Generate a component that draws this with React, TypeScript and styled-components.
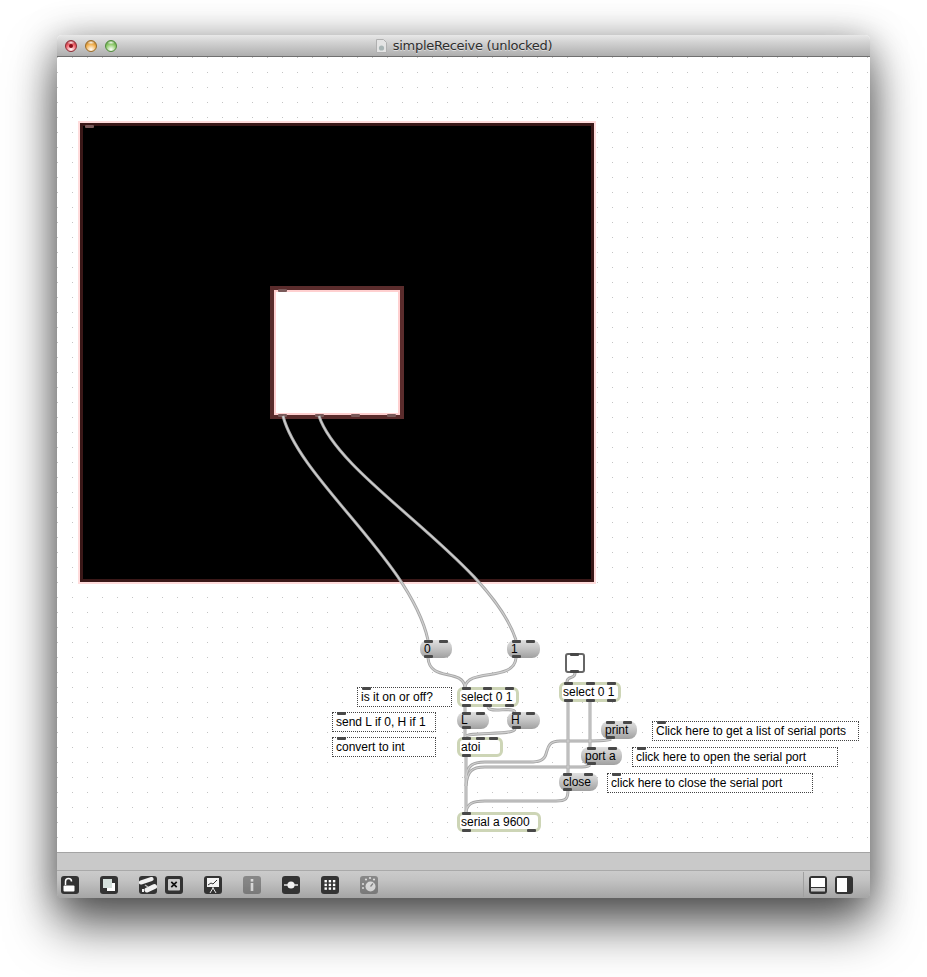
import React from 'react'
import styled, { createGlobalStyle } from 'styled-components'

const GlobalStyle = createGlobalStyle`
  html, body {
    margin: 0;
    padding: 0;
    background: #fff;
  }
  body {
    width: 927px;
    height: 977px;
    overflow: hidden;
  }
`

const Page = styled.div`
  width: 927px;
  height: 977px;
  padding: 35px 57px 0;
  box-sizing: border-box;
`

const Window = styled.div`
  width: 813px;
  height: 863px;
  display: flex;
  flex-direction: column;
  border-radius: 5px 5px 4px 4px;
  overflow: hidden;
`

const WindowShadow = styled.div`
  width: 813px;
  height: 863px;
  border-radius: 5px;
  box-shadow: 0 28px 50px rgba(0, 0, 0, 0.6), 0 4px 36px rgba(0, 0, 0, 0.35);
`

const TitleBar = styled.div`
  height: 21px;
  flex: none;
  position: relative;
  display: flex;
  align-items: center;
  justify-content: center;
  gap: 6px;
  padding-left: 1px;
  background: linear-gradient(#e8e8e8, #d2d2d2 35%, #aeaeae);
  border-bottom: 1px solid #6f6f6f;
`

const Lights = styled.div`
  position: absolute;
  left: 8px;
  top: 5px;
  display: flex;
  gap: 8px;
`

const Light = styled.span<{ $color: string; $dark: string }>`
  width: 12px;
  height: 12px;
  border-radius: 50%;
  box-sizing: border-box;
  border: 1px solid ${p => p.$dark};
  background: radial-gradient(ellipse 4px 2px at 50% 15%, rgba(255, 255, 255, 0.85), transparent),
    radial-gradient(circle at 50% 85%, #fff 0, ${p => p.$color} 55%, ${p => p.$dark} 100%);
  display: flex;
  align-items: center;
  justify-content: center;
`

const CloseDot = styled.i`
  width: 4px;
  height: 4px;
  border-radius: 50%;
  background: #8a0d18;
`

const Title = styled.span`
  font: 13px/16px 'DejaVu Sans', sans-serif;
  letter-spacing: -0.3px;
  color: #2e2e2e;
  text-shadow: 0 1px 0 rgba(255, 255, 255, 0.5);
`

const Canvas = styled.div`
  position: relative;
  flex: 1;
  background-color: #fff;
  background-image: radial-gradient(circle at 0.5px 0.5px, #c4c4c4 0.6px, transparent 0.8px);
  background-size: 15px 15px;
  background-position: 0 0;
`

const Wires = styled.svg`
  position: absolute;
  left: 0;
  top: 0;
  z-index: 3;
  pointer-events: none;
`

const Panel = styled.div<{ $x: number; $y: number; $w: number; $h: number; $fill: string }>`
  position: absolute;
  left: ${p => p.$x}px;
  top: ${p => p.$y}px;
  width: ${p => p.$w}px;
  height: ${p => p.$h}px;
  box-sizing: border-box;
  background: ${p => p.$fill};
  border: 3px solid #3a1818;
  outline: 2px solid #ffdcdc;
  z-index: 1;
`

const InnerPanel = styled(Panel)`
  border-width: 4px;
  border-color: #5a2c2c;
  outline: none;
  z-index: 2;
  box-shadow: inset 0 0 0 2px #ffd0d0;
`

const PanelPort = styled.i<{ $x: number; $y: number }>`
  position: absolute;
  left: ${p => p.$x}px;
  top: ${p => p.$y}px;
  width: 9px;
  height: 3px;
  border-radius: 1px;
  background: #7a5a5a;
`

const Node = styled.div<{ $x: number; $y: number; $w: number; $h: number }>`
  position: absolute;
  left: ${p => p.$x}px;
  top: ${p => p.$y}px;
  width: ${p => p.$w}px;
  height: ${p => p.$h}px;
  box-sizing: border-box;
  font: 12px/${p => p.$h}px 'Liberation Sans', Arial, sans-serif;
  color: #000;
  white-space: nowrap;
  z-index: 4;
`

const ObjectBox = styled(Node)`
  background: #fff;
  border: 3px solid #cdd5b6;
  border-radius: 6px;
  padding-left: 1px;
  line-height: 14px;
`

const MessageBox = styled(Node)`
  background: linear-gradient(#e0e0e0, #c6c6c6 45%, #a0a0a0);
  border-radius: 8px;
  padding-left: 4px;
`

const CommentBox = styled(Node)`
  background: #fff;
  border: 1px dotted #444;
  padding-left: 3px;
  line-height: 19px;
`

const ToggleBox = styled(Node)`
  background: #fff;
  border: 2px solid #666;
  border-radius: 3px;
`

const Port = styled.i<{ $x: number; $side: 'top' | 'bottom'; $inset: number }>`
  position: absolute;
  left: ${p => p.$x}px;
  ${p => p.$side}: ${p => -p.$inset}px;
  width: 9px;
  height: 3px;
  border-radius: 1px;
  background: #484848;
`

const StatusStrip = styled.div`
  height: 19px;
  flex: none;
  box-sizing: border-box;
  background: #c9c9c9;
  border-top: 1px solid #a4a4a4;
  border-bottom: 1px solid #a9a9a9;
`

const Toolbar = styled.div`
  height: 27px;
  flex: none;
  box-sizing: border-box;
  display: flex;
  align-items: center;
  padding: 0 17px 0 4px;
  gap: 21px;
  background: linear-gradient(#cbcbcb, #c2c2c2 35%, #a5a5a5);
`

const ToolGroup = styled.div`
  display: flex;
  gap: 8px;
`

const ToolButton = styled.svg<{ $dim?: boolean }>`
  width: 18px;
  height: 18px;
  display: block;
  opacity: ${p => (p.$dim ? 0.42 : 1)};
`

const RightTools = styled.div`
  margin-left: auto;
  display: flex;
  gap: 8px;
  align-items: center;
  height: 25px;
  padding-left: 5px;
  border-left: 1px solid #a0a0a0;
`

type Shape = {
  kind: 'object' | 'message' | 'comment' | 'toggle'
  label?: string
  x: number
  y: number
  w: number
  h: number
  top: number[]
  bottom: number[]
}

// page coordinates, the canvas starts at 57,57
const shapes: Shape[] = [
  { kind: 'message', label: '0', x: 420, y: 640, w: 32, h: 18, top: [4, 19], bottom: [4] },
  { kind: 'message', label: '1', x: 507, y: 640, w: 33, h: 18, top: [5, 19], bottom: [5] },
  { kind: 'comment', label: 'is it on or off?', x: 357, y: 687, w: 95, h: 20, top: [5], bottom: [] },
  { kind: 'object', label: 'select 0 1', x: 457, y: 687, w: 62, h: 20, top: [5, 26, 48], bottom: [5, 26, 48] },
  { kind: 'comment', label: 'send L if 0, H if 1', x: 332, y: 712, w: 104, h: 20, top: [5], bottom: [] },
  { kind: 'message', label: 'L', x: 457, y: 712, w: 32, h: 17, top: [5, 19], bottom: [5] },
  { kind: 'message', label: 'H', x: 507, y: 712, w: 33, h: 17, top: [5, 19], bottom: [5] },
  { kind: 'comment', label: 'convert to int', x: 332, y: 737, w: 104, h: 20, top: [5], bottom: [] },
  { kind: 'object', label: 'atoi', x: 457, y: 737, w: 46, h: 20, top: [5, 19, 32], bottom: [5] },
  { kind: 'object', label: 'serial a 9600', x: 457, y: 812, w: 84, h: 20, top: [5], bottom: [5, 70] },
  { kind: 'toggle', x: 565, y: 653, w: 20, h: 20, top: [5], bottom: [5] },
  { kind: 'object', label: 'select 0 1', x: 559, y: 682, w: 62, h: 20, top: [5, 27, 48], bottom: [5, 27, 48] },
  { kind: 'message', label: 'print', x: 601, y: 721, w: 36, h: 18, top: [5, 22], bottom: [5] },
  { kind: 'comment', label: 'Click here to get a list of serial ports', x: 652, y: 721, w: 207, h: 20, top: [5], bottom: [] },
  { kind: 'message', label: 'port a', x: 581, y: 747, w: 41, h: 18, top: [6, 27], bottom: [6] },
  { kind: 'comment', label: 'click here to open the serial port', x: 632, y: 747, w: 206, h: 20, top: [5], bottom: [] },
  { kind: 'message', label: 'close', x: 559, y: 773, w: 39, h: 18, top: [4, 25], bottom: [4] },
  { kind: 'comment', label: 'click here to close the serial port', x: 607, y: 773, w: 206, h: 20, top: [5], bottom: [] },
]

const boxes = { object: ObjectBox, message: MessageBox, comment: CommentBox, toggle: ToggleBox }
const insets = { object: 3, message: 0, comment: 1, toggle: 2 }

const cords = [
  'M283 416C300 480 410 560 428 640',
  'M319 416C340 480 490 560 516 640',
  'M428 658C430 682 462 668 465 687',
  'M516 658C514 682 468 668 465 687',
  'M465 707V712',
  'M488 707C490 714 513 706 515 712',
  'M465 729V737',
  'M515 729C514 736 467 731 465 737',
  'M466 757V812',
  'M611 739C608 741 600 741 560 741C548 741 548 748 546 754C544 761 538 762 530 762H485C472 762 467 766 466 778',
  'M590 765C588 767 585 767 575 767H485C472 767 467 771 466 786',
  'M568 790C568 799 566 801 556 801H485C472 801 467 804 466 812',
  'M568 702V773',
  'M590 702V747',
  'M575 673C575 680 567 675 567 682',
]

function Cords() {
  return (
    <Wires width={813} height={795} viewBox="57 57 813 795" fill="none">
      {cords.map(d => (
        <path key={d} d={d} stroke="#a6a6a6" strokeWidth={3} />
      ))}
      {cords.map(d => (
        <path key={`${d}-in`} d={d} stroke="#d0d0d0" strokeWidth={1.2} />
      ))}
    </Wires>
  )
}

function Tools() {
  return (
    <>
      <ToolButton viewBox="0 0 18 18">
        <rect width="18" height="18" rx="3" fill="#333" />
        <rect x="2.5" y="9.5" width="11" height="6" rx="1" fill="#fff" />
        <path d="M4.5 9V5.5a3 3 0 0 1 6 0" fill="none" stroke="#fff" strokeWidth="1.5" />
      </ToolButton>
      <ToolButton viewBox="0 0 18 18">
        <rect width="18" height="18" rx="3" fill="#333" />
        <rect x="7" y="7" width="8" height="8" fill="#fff" />
        <rect x="3" y="3" width="9" height="9" fill="#d5e0dc" />
      </ToolButton>
      <ToolGroup>
        <ToolButton viewBox="0 0 18 18">
          <rect width="18" height="18" rx="3" fill="#333" />
          <path d="M2 6.5 12.5 3" stroke="#f2f2f2" strokeWidth="4" strokeLinecap="round" />
          <path d="M8 14l7.5-3.5" stroke="#f2f2f2" strokeWidth="5" strokeLinecap="round" />
          <path d="M3 14.5h2" stroke="#f2f2f2" strokeWidth="3" />
          <path d="M6 9l3 2" stroke="#bbb" strokeWidth="1.5" />
        </ToolButton>
        <ToolButton viewBox="0 0 18 18">
          <rect width="18" height="18" rx="3" fill="#333" />
          <rect x="3" y="3" width="12" height="11.5" rx="1" fill="#c9c9c9" />
          <path d="M6.3 5.8l5.4 5.4M11.7 5.8l-5.4 5.4" stroke="#111" strokeWidth="1.7" />
        </ToolButton>
      </ToolGroup>
      <ToolButton viewBox="0 0 18 18">
        <rect width="18" height="18" rx="3" fill="#333" />
        <rect x="3" y="2" width="12" height="9" fill="#f4f4f4" />
        <path d="M4 9l3-2 2 1 4-4" fill="none" stroke="#333" strokeWidth="1" />
        <path d="M9 11v2M9 12l-3 5M9 12l3 5" stroke="#e8e8e8" strokeWidth="1" />
      </ToolButton>
      <ToolButton $dim viewBox="0 0 18 18">
        <rect width="18" height="18" rx="3" fill="#333" />
        <rect x="7.7" y="3" width="2.6" height="2.6" fill="#fff" />
        <rect x="7.7" y="7" width="2.6" height="8" fill="#fff" />
      </ToolButton>
      <ToolButton viewBox="0 0 18 18">
        <rect width="18" height="18" rx="3" fill="#333" />
        <path d="M2 9h14" stroke="#f2f2f2" strokeWidth="1.4" />
        <circle cx="9" cy="9" r="3.6" fill="#f2f2f2" />
      </ToolButton>
      <ToolButton viewBox="0 0 18 18">
        <rect width="18" height="18" rx="3" fill="#333" />
        {[4, 7.7, 11.4].map(y =>
          [3.5, 7.7, 11.9].map(x => <rect key={`${x}-${y}`} x={x} y={y} width="2.4" height="2.4" fill="#fff" />),
        )}
      </ToolButton>
      <ToolButton $dim viewBox="0 0 18 18">
        <rect width="18" height="18" rx="3" fill="#333" />
        <circle cx="10.5" cy="10.5" r="5" fill="#fff" />
        <path d="M10.5 10.5l2.5-3" stroke="#333" strokeWidth="1.2" />
        {[[3, 8], [3, 12], [6, 3.5], [10, 2], [14, 3.5]].map(([x, y]) => (
          <circle key={`${x}-${y}`} cx={x} cy={y} r="1.1" fill="#fff" />
        ))}
      </ToolButton>
      <RightTools>
        <ToolButton viewBox="0 0 18 18">
          <rect width="18" height="18" rx="3" fill="#333" />
          <rect x="2" y="2" width="14" height="9" fill="#fff" />
          <rect x="2" y="12" width="14" height="3.5" fill="#c8c8c8" />
        </ToolButton>
        <ToolButton viewBox="0 0 18 18">
          <rect width="18" height="18" rx="3" fill="#333" />
          <rect x="2" y="2" width="10" height="14" fill="#fff" />
        </ToolButton>
      </RightTools>
    </>
  )
}

export default function App() {
  return (
    <Page>
      <GlobalStyle />
      <WindowShadow>
        <Window>
          <TitleBar>
            <Lights>
              <Light $color="#f0616a" $dark="#8e2a33">
                <CloseDot />
              </Light>
              <Light $color="#f2b04f" $dark="#9b6a25" />
              <Light $color="#8fcb6c" $dark="#4f8a3a" />
            </Lights>
            <svg width="11" height="14" viewBox="0 0 11 14">
              <path d="M.5.5h7l3 3v10H.5z" fill="#e4e4e4" stroke="#b0b0b0" />
              <circle cx="5.5" cy="9" r="2.6" fill="#a9b5b5" />
            </svg>
            <Title>simpleReceive (unlocked)</Title>
          </TitleBar>
          <Canvas>
            <Panel $x={23} $y={66} $w={514} $h={459} $fill="#000">
              <PanelPort $x={2} $y={-1} />
            </Panel>
            <InnerPanel $x={213} $y={229} $w={134} $h={133} $fill="#fff">
              <PanelPort $x={4} $y={-1} />
              <PanelPort $x={4} $y={124} />
              <PanelPort $x={41} $y={124} />
              <PanelPort $x={77} $y={124} />
              <PanelPort $x={113} $y={124} />
            </InnerPanel>
            <Cords />
            {shapes.map(({ kind, label, x, y, w, h, top, bottom }) => {
              const Box = boxes[kind]
              const inset = insets[kind]
              return (
                <Box key={`${label}-${x}-${y}`} $x={x - 57} $y={y - 57} $w={w} $h={h}>
                  {label}
                  {top.map(o => (
                    <Port key={`t${o}`} $x={o - inset} $side="top" $inset={inset} />
                  ))}
                  {bottom.map(o => (
                    <Port key={`b${o}`} $x={o - inset} $side="bottom" $inset={inset} />
                  ))}
                </Box>
              )
            })}
          </Canvas>
          <StatusStrip />
          <Toolbar>
            <Tools />
          </Toolbar>
        </Window>
      </WindowShadow>
    </Page>
  )
}
